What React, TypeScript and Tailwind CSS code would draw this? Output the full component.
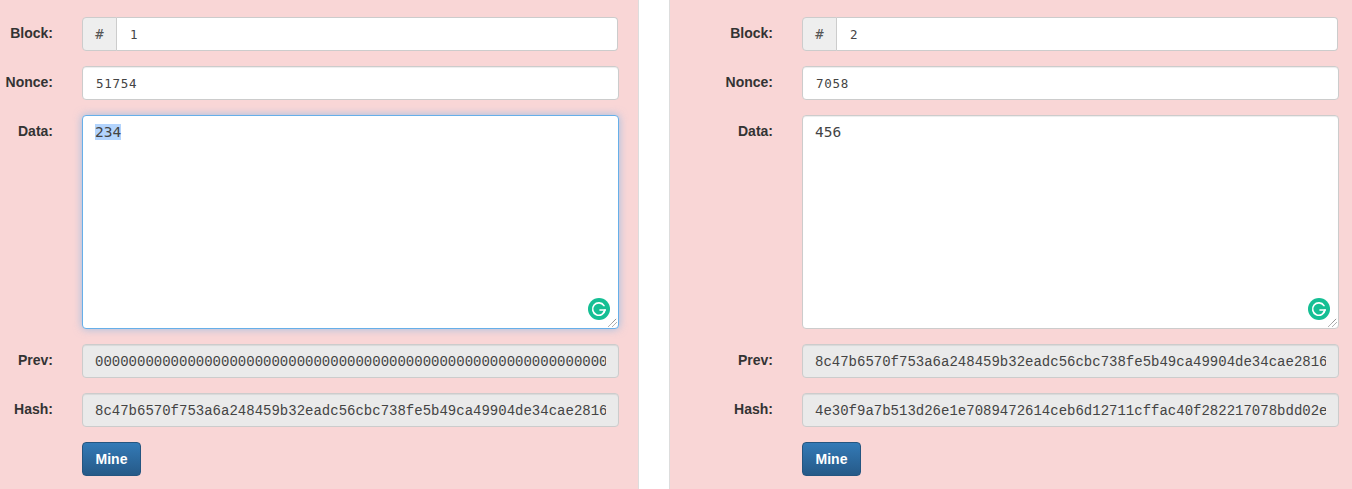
const mono = "font-['DejaVu_Sans_Mono',monospace]";

const field =
  "h-[34px] w-full min-w-0 rounded-[4px] border border-[#ccc] pl-[13px] pr-3 pt-px text-[12.5px] tracking-[0.7px] text-[#444] outline-none shadow-[inset_0_1px_1px_rgba(0,0,0,0.075)] font-['DejaVu_Sans_Mono',monospace]";

const hashField =
  "h-[34px] w-full min-w-0 rounded-[4px] border border-[#ccc] bg-[#eaeaea] px-3 pt-px text-[14px] text-[#444] outline-none shadow-[inset_0_1px_1px_rgba(0,0,0,0.075)] font-['Liberation_Mono',monospace]";

function Row({ label, labelClass, children }: { label: string; labelClass: string; children: React.ReactNode }) {
  return (
    <div className="flex items-start">
      <label className={`${labelClass} shrink-0 pt-[6px] text-right text-[14px] font-bold leading-5 text-[#333]`}>{label}</label>
      <div className="ml-[29px] min-w-0 flex-1">{children}</div>
    </div>
  );
}

function Grammarly() {
  return (
    <svg className="absolute bottom-[8px] right-[8px]" width="22" height="22" viewBox="0 0 22 22">
      <circle cx="11" cy="11" r="11" fill="#15bf94" />
      <path d="M16 7.6A6.2 6.2 0 1 0 17 12H12" fill="none" stroke="#fff" strokeWidth="1.6" strokeLinecap="round" />
      <path d="M17 12l-1.6 2.6" fill="none" stroke="#fff" strokeWidth="1.6" strokeLinecap="round" />
    </svg>
  );
}

function Grip() {
  return (
    <svg className="absolute bottom-px right-px" width="9" height="9" viewBox="0 0 9 9">
      <path d="M0.5 8.5L8.5 0.5M4.5 8.5L8.5 4.5" stroke="#666" strokeWidth="1" strokeDasharray="1 0.6" fill="none" />
    </svg>
  );
}

function Block({
  n,
  nonce,
  data,
  prev,
  hash,
  focused,
  labelClass,
  panelClass,
}: {
  n: string;
  nonce: string;
  data: string;
  prev: string;
  hash: string;
  focused: boolean;
  labelClass: string;
  panelClass: string;
}) {
  return (
    <section className={`${panelClass} flex h-[489px] flex-col gap-[15px] overflow-hidden bg-[#f9d6d6] pt-[17px]`}>
      <Row label="Block:" labelClass={labelClass}>
        <div className="mr-px flex h-[34px]">
          <span className="flex w-[35px] shrink-0 items-center justify-center rounded-l-[4px] border border-[#ccc] bg-[#eee] text-[14px] text-[#555] font-['DejaVu_Sans_Mono',monospace]">
            #
          </span>
          <input
            readOnly
            value={n}
            className="h-[34px] w-full min-w-0 rounded-r-[4px] border border-l-0 border-[#ccc] bg-white pl-[13px] pr-3 pt-px text-[12.5px] tracking-[0.7px] text-[#444] outline-none font-['DejaVu_Sans_Mono',monospace]"
          />
        </div>
      </Row>
      <Row label="Nonce:" labelClass={labelClass}>
        <input readOnly value={nonce} className={`${field} bg-white`} />
      </Row>
      <Row label="Data:" labelClass={labelClass}>
        <div
          className={`relative h-[214px] rounded-[4px] border bg-white px-3 py-[6px] text-[14.5px] leading-5 text-[#444] ${mono} ${
            focused
              ? "border-[#66afe9] shadow-[0_0_8px_rgba(102,175,233,0.6)]"
              : "border-[#ccc] shadow-[inset_0_1px_1px_rgba(0,0,0,0.075)]"
          }`}
        >
          <span className={focused ? "bg-[#b3d4fd]" : ""}>{data}</span>
          <Grammarly />
          <Grip />
        </div>
      </Row>
      <Row label="Prev:" labelClass={labelClass}>
        <input readOnly value={prev} className={hashField} />
      </Row>
      <Row label="Hash:" labelClass={labelClass}>
        <input readOnly value={hash} className={hashField} />
      </Row>
      <Row label="" labelClass={labelClass}>
        <button className="h-[34px] w-[59px] rounded-[4px] border border-[#245580] bg-gradient-to-b from-[#337ab7] to-[#265a88] text-[14px] font-bold text-white font-['Liberation_Sans',sans-serif]">
          Mine
        </button>
      </Row>
    </section>
  );
}

export default function App() {
  const zero = "0".repeat(64);
  const h1 = "8c47b6570f753a6a248459b32eadc56cbc738fe5b49ca49904de34cae2816e7f";
  const h2 = "4e30f9a7b513d26e1e7089472614ceb6d12711cffac40f282217078bdd02e1a9";
  return (
    <div className="flex h-[489px] w-[1352px] justify-between overflow-hidden bg-white font-['Liberation_Sans',sans-serif]">
      <Block
        n="1"
        nonce="51754"
        data="234"
        prev={zero}
        hash={h1}
        focused
        labelClass="w-[53px]"
        panelClass="w-[639px] border-r border-[#ddd] pr-[19px]"
      />
      <Block
        n="2"
        nonce="7058"
        data="456"
        prev={h1}
        hash={h2}
        focused={false}
        labelClass="w-[103px]"
        panelClass="w-[683px] border-l border-[#ddd] pr-[13px]"
      />
    </div>
  );
}
